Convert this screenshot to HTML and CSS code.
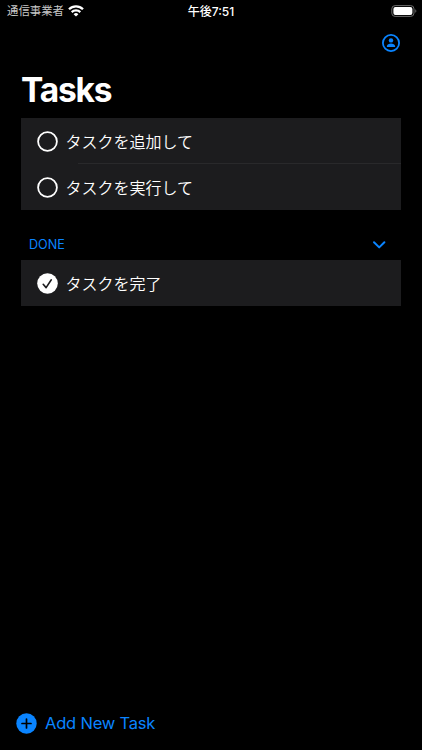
FILE: index.html
```html
<!DOCTYPE html>
<html lang="ja">
<head>
    <meta charset="UTF-8">
    <meta name="viewport" content="width=device-width, initial-scale=1.0">
    <title>Tasks</title>
    <link rel="stylesheet" href="styles.css">
</head>
<body>
    <div class="status-bar">
        <div class="carrier">
            <span>通信事業者</span>
            <svg class="wifi" width="16" height="12" viewBox="0 0 16 12" fill="none" stroke="#fff" stroke-width="2.3">
                <path d="M1 4.3a10 10 0 0 1 14 0"></path>
                <path d="M3.7 7.1a6.2 6.2 0 0 1 8.6 0"></path>
                <path d="M8 11.6L5.6 9.2a3.5 3.5 0 0 1 4.8 0z" fill="#fff" stroke="none"></path>
            </svg>
        </div>
        <div class="time">午後7:51</div>
        <div class="battery">
            <svg width="26" height="12" viewBox="0 0 26 12">
                <rect x="0.8" y="0.6" width="22.2" height="10.8" rx="3.3" fill="none" stroke="#6c6c6c" stroke-width="1"></rect>
                <rect x="2.4" y="2.1" width="19" height="7.8" rx="2" fill="#fff"></rect>
                <path d="M24.3 4.2v3.6c1.4-.6 1.4-3 0-3.6z" fill="#6c6c6c"></path>
            </svg>
        </div>
    </div>

    <div class="nav-bar">
        <svg width="18" height="18" viewBox="0 0 18 18">
            <circle cx="9" cy="9" r="8.1" fill="none" stroke="#0a84ff" stroke-width="1.8"></circle>
            <circle cx="9" cy="6.4" r="2.2" fill="#0a84ff"></circle>
            <path d="M4.9 13v-.9c0-1.9 2.3-2.7 4.1-2.7s4.1.8 4.1 2.7v.9z" fill="#0a84ff"></path>
        </svg>
    </div>

    <h1 class="title">Tasks</h1>

    <ul class="task-list">
        <li class="task">
            <svg class="check" width="21" height="21" viewBox="0 0 21 21">
                <circle cx="10.5" cy="10.5" r="9.4" fill="none" stroke="#fff" stroke-width="1.8"></circle>
            </svg>
            <span>タスクを追加して</span>
        </li>
        <li class="task">
            <svg class="check" width="21" height="21" viewBox="0 0 21 21">
                <circle cx="10.5" cy="10.5" r="9.4" fill="none" stroke="#fff" stroke-width="1.8"></circle>
            </svg>
            <span>タスクを実行して</span>
        </li>
    </ul>

    <div class="section-header">
        <span>DONE</span>
        <svg width="14" height="9" viewBox="0 0 14 9" fill="none" stroke="#0a84ff" stroke-width="2" stroke-linecap="round" stroke-linejoin="round">
            <path d="M2 2.2l5.2 5.2 5.2-5.2"></path>
        </svg>
    </div>

    <ul class="task-list">
        <li class="task">
            <svg class="check" width="21" height="21" viewBox="0 0 21 21">
                <circle cx="10.5" cy="10.5" r="10.3" fill="#fff"></circle>
                <path d="M6.2 11.3l2.9 3.3 5.2-7.8" fill="none" stroke="#1c1c1e" stroke-width="1.6" stroke-linecap="round" stroke-linejoin="round"></path>
            </svg>
            <span>タスクを完了</span>
        </li>
    </ul>

    <div class="toolbar">
        <svg width="21" height="21" viewBox="0 0 21 21">
            <circle cx="10.5" cy="10.5" r="10.2" fill="#0a84ff"></circle>
            <path d="M10.5 6v9M6 10.5h9" stroke="#000" stroke-width="1.7" stroke-linecap="round"></path>
        </svg>
        <span>Add New Task</span>
    </div>
</body>
</html>
```
FILE: styles.css
```css
* {
    box-sizing: border-box;
}
body {
    margin: 0;
    height: 750px;
    display: flex;
    flex-direction: column;
    background-color: #000;
    color: #fff;
    font-family: Inter, "Noto Sans CJK JP", sans-serif;
    overflow: hidden;
}
.status-bar {
    display: grid;
    grid-template-columns: 1fr auto 1fr;
    align-items: center;
    height: 21px;
    padding: 0 5px 0 7px;
    font-size: 11.4px;
    line-height: 21px;
}
.carrier {
    display: flex;
    align-items: center;
    gap: 4px;
    color: #c8c8c8;
}
.carrier span {
    padding-top: 1px;
}
.time {
    padding: 1px 2px 0 0;
    font-weight: 500;
    font-size: 12px;
}
.battery {
    display: flex;
    justify-content: flex-end;
}
.nav-bar {
    display: flex;
    justify-content: flex-end;
    align-items: center;
    height: 45px;
    padding: 0 22px 1px 0;
}
.title {
    margin: 0;
    padding: 0 21px;
    height: 52px;
    font-size: 33.5px;
    font-weight: 700;
    line-height: 48px;
    letter-spacing: -1.2px;
}
.task-list {
    list-style: none;
    margin: 0 21px;
    padding: 0;
    background-color: #1c1c1e;
}
.task {
    position: relative;
    display: flex;
    align-items: center;
    gap: 8px;
    height: 46px;
    padding-left: 15.5px;
    font-size: 16px;
    font-weight: 350;
    line-height: 24px;
}
.task span {
    padding-top: 1px;
}
.task + .task::before {
    content: "";
    position: absolute;
    top: -1px;
    left: 57px;
    right: 0;
    height: 1px;
    background-color: #29292b;
}
.section-header {
    display: flex;
    justify-content: space-between;
    align-items: center;
    height: 50px;
    padding: 18px 36px 0 29px;
    color: #0a84ff;
    font-size: 12.6px;
}
.toolbar {
    display: flex;
    align-items: center;
    gap: 8px;
    margin-top: auto;
    height: 54px;
    padding-left: 16px;
    color: #0a84ff;
    font-size: 16.5px;
    letter-spacing: -0.2px;
}
```
